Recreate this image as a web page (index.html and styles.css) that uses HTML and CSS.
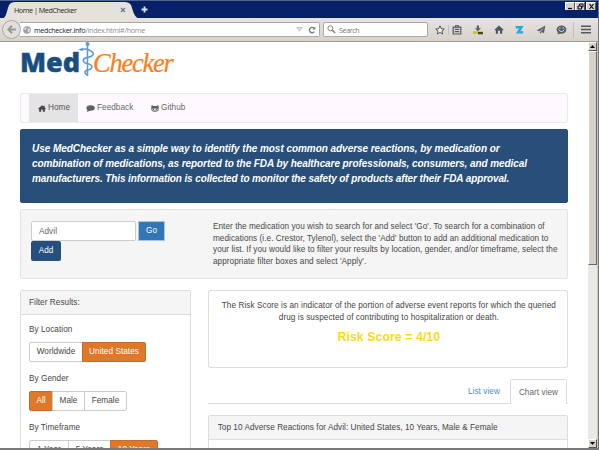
FILE: index.html
```html
<!DOCTYPE html>
<html lang="en">
<head>
<meta charset="utf-8">
<title>Home | MedChecker</title>
<link rel="stylesheet" href="styles.css">
</head>
<body>
<div class="window">
  <div class="titlebar">
    <svg class="tab-shape" width="145" height="18" viewBox="0 0 145 18"><path d="M0 18C6 18 6 13 8 7Q9 1 15 1H125Q131 1 132 7C134 13 135 18 142 18Z" fill="#e5e1db"/></svg>
    <span class="tab-title">Home | MedChecker</span>
    <svg class="tab-close" width="6" height="6" viewBox="0 0 6 6"><path d="M1 1L5 5M5 1L1 5" stroke="#6c7780" stroke-width="1.3"/></svg>
    <svg class="tab-new" width="7" height="7" viewBox="0 0 7 7"><path d="M3.5 .5V6.5M.5 3.5H6.5" stroke="#dce1ee" stroke-width="1.8"/></svg>
    <div class="controls">
      <span class="ctl"><svg width="9" height="7" viewBox="0 0 9 7"><path d="M2 5.5H6" stroke="#000" stroke-width="1.2"/></svg></span>
      <span class="ctl"><svg width="9" height="7" viewBox="0 0 9 7"><path d="M3.5 2.5V1H7V4H5.5M2 3H5.5V6H2Z" fill="none" stroke="#000"/></svg></span>
      <span class="ctl last"><svg width="9" height="7" viewBox="0 0 9 7"><path d="M2.5 1L6.5 6M6.5 1L2.5 6" stroke="#000" stroke-width="1.1"/></svg></span>
    </div>
  </div>
  <div class="toolbar">
    <span class="back"><svg width="10" height="9" viewBox="0 0 10 9"><path d="M5 .8L1.4 4.5L5 8.2M1.6 4.5H9" fill="none" stroke="#93999d" stroke-width="2"/></svg></span>
    <div class="url">
      <svg class="globe" width="8" height="8" viewBox="0 0 8 8"><circle cx="4" cy="4" r="3.8" fill="#9b9fa3"/><path d="M1.2 2L3.5 1.2L3 3.6L1.6 4M4.5 3L6.8 2.4L6.5 5.5L5 6.5Z" fill="#e3e5e6"/></svg>
      <span class="address"><b>medchecker.info</b>/index.html#/home</span>
      <svg class="drop" width="7" height="5" viewBox="0 0 7 5"><path d="M.7 .5H6.3L3.5 4.3Z" fill="#dde1ee" stroke="#b4bbce" stroke-width=".8"/></svg>
      <svg width="8" height="8" viewBox="0 0 8 8"><path d="M6.3 5.7A2.7 2.7 0 1 1 6 2.1" fill="none" stroke="#74818d" stroke-width="1.4"/><path d="M7.3 .4V3.6H4.2Z" fill="#74818d"/></svg>
    </div>
    <div class="search">
      <svg width="9" height="9" viewBox="0 0 9 9"><circle cx="3.4" cy="3.3" r="2.5" fill="none" stroke="#858585"/><path d="M5.2 5.1L8.2 8" stroke="#858585" stroke-width="1.5"/></svg>
      <span>Search</span>
    </div>
    <div class="tools">
      <svg width="10" height="10" viewBox="0 0 10 10"><path d="M5 .9L6.2 3.7L9.3 4L7 6L7.7 9L5 7.4L2.3 9L3 6L.7 4L3.8 3.7Z" fill="#eee" stroke="#4e5a64"/></svg>
      <i class="sep"></i>
      <svg class="clip" width="10" height="10" viewBox="0 0 10 10"><path d="M1.2 2.2H8.8V9H1.2Z" fill="none" stroke="#4e5a64" stroke-width="1.2"/><path d="M3.5 2V.8H6.5V2M2.8 4.4H7.2M2.8 6.6H7.2" fill="none" stroke="#4e5a64" stroke-width="1.1"/></svg>
      <svg class="dl" width="12" height="10" viewBox="0 0 12 10"><path d="M4.8 .5H7V3.3H9L5.9 6.3L2.8 3.3H4.8Z" fill="#52616b"/><path d="M1 6.2H11V9H1Z" fill="#bccb37"/><path d="M6 7H11V9.3H6Z" fill="#454914"/></svg>
      <svg class="hm" width="10" height="9" viewBox="0 0 10 9"><path d="M.4 4.8L5 .6L9.6 4.8L8.9 5.5L8.2 5V8.7H6V5.8H4V8.7H1.8V5L1 5.5Z" fill="#4e5a64"/></svg>
      <svg class="zz" width="9" height="9" viewBox="0 0 9 9"><path d="M.4 1H8.6L5.4 6.2L8 6V8.5H1L4 3.2L1 3.7Z" fill="#22a9e8"/></svg>
      <svg class="plane" width="10" height="10" viewBox="0 0 10 10"><path d="M9.3 .5L8 8.3L5.6 7L4.2 9.2L3.8 6.2L.6 5.6Z" fill="#52616b"/><path d="M3.8 6.2L8 2.3L4.8 6.7" fill="#d9dcdc"/></svg>
      <svg class="chat" width="11" height="10" viewBox="0 0 11 10"><ellipse cx="5.5" cy="4.6" rx="4.9" ry="4.1" fill="#52616b"/><path d="M2 6L1.5 9.6L5 8Z" fill="#52616b"/><path d="M2.5 4.5Q5.5 8.6 8.5 4.5M3 3H4.5M6.5 3H8" fill="none" stroke="#e3e3df" stroke-width=".9"/></svg>
      <i class="sep two"></i>
      <svg class="menu" width="10" height="9" viewBox="0 0 10 9"><path d="M0 1.3H10M0 4.5H10M0 7.7H10" stroke="#4e5a64" stroke-width="1.4"/></svg>
    </div>
  </div>
  <div class="viewport">
    <main class="page">
      <div class="logo">
        <span class="med">Med</span>
        <svg width="18" height="37" viewBox="0 0 18 37"><g fill="none" stroke="#5f98cf"><path d="M9.5 3V34" stroke-width="1.5"/><path d="M2 8Q7 6 12 8.5C18 11.500 15 14.500 9 15.500C4 16.500 4 20.500 9 21.500C16 23 15 27 9.500 28C6 29 6 32 10 33" stroke-width="1.5"/></g><circle cx="9.500" cy="2" r="2" fill="#5f98cf"/><path d="M0 7.500L5 6V9Z" fill="#5f98cf"/></svg>
        <span class="checker">Checker</span>
      </div>
      <nav class="nav">
        <a class="on"><svg width="8" height="7" viewBox="0 0 8 7"><path d="M0 3.7L4 .3L5.500 1.600V.8H6.700V2.600L8 3.700L7.500 4.200L6.900 3.700V6.700H4.800V4.500H3.200V6.700H1.100V3.700L.5 4.200Z" fill="#484848"/></svg><span>Home</span></a>
        <a class="fb"><svg width="9" height="7" viewBox="0 0 9 7"><ellipse cx="4.600" cy="3" rx="4.200" ry="2.800" fill="#606060"/><path d="M1.800 4L.8 6.900L4.500 5.500Z" fill="#606060"/></svg><span>Feedback</span></a>
        <a class="gh"><svg width="8" height="7" viewBox="0 0 8 7"><path d="M.5 0L2.500 1H5.500L7.500 0L7.700 3.500Q8 6.800 4 6.800Q0 6.800 .3 3.500Z" fill="#606060"/><path d="M1.500 3.600H6.500V5.500H1.500Z" fill="#f5f0f5"/><path d="M2.600 3.800V5.200M5.400 3.800V5.200" stroke="#606060"/></svg><span>Github</span></a>
      </nav>
      <section class="hero">
        <p class="h1">Use MedChecker as a simple way to identify the most common adverse reactions, by medication or</p>
        <p class="h2">combination of medications, as reported to the FDA by healthcare professionals, consumers, and medical</p>
        <p class="h3">manufacturers. This information is collected to monitor the safety of products after their FDA approval.</p>
      </section>
      <section class="query">
        <div class="form"><span class="input">Advil</span><span class="btn go">Go</span><span class="btn add">Add</span></div>
        <div class="help">
          <p>Enter the medication you wish to search for and select 'Go'. To search for a combination of</p>
          <p>medications (i.e. Crestor, Tylenol), select the 'Add' button to add an additional medication to</p>
          <p>your list. If you would like to filter your results by location, gender, and/or timeframe, select the</p>
          <p>appropriate filter boxes and select 'Apply'.</p>
        </div>
      </section>
      <div class="columns">
        <aside class="panel filter">
          <div class="head">Filter Results:</div>
          <div class="body">
            <div class="label">By Location</div>
            <div class="group"><span style="width:54px">Worldwide</span><span class="sel" style="width:64px">United States</span></div>
            <div class="label">By Gender</div>
            <div class="group"><span class="sel" style="width:24px">All</span><span style="width:33px">Male</span><span style="width:43px">Female</span></div>
            <div class="label">By Timeframe</div>
            <div class="group"><span style="width:40px">1 Year</span><span style="width:43px">5 Years</span><span class="sel" style="width:48px">10 Years</span></div>
          </div>
        </aside>
        <div class="results">
          <div class="panel risk">
            <p>The Risk Score is an indicator of the portion of adverse event reports for which the queried</p>
            <p>drug is suspected of contributing to hospitalization or death.</p>
            <strong>Risk Score = 4/10</strong>
          </div>
          <div class="tabs"><a>List view</a><a class="active">Chart view</a></div>
          <div class="panel chart"><div class="head">Top 10 Adverse Reactions for Advil: United States, 10 Years, Male &amp; Female</div></div>
        </div>
      </div>
    </main>
    <div class="scroll">
      <span class="arrow"><svg width="5" height="3" viewBox="0 0 5 3"><path d="M0 3L2.500 0L5 3Z"/></svg></span>
      <span class="thumb"></span>
      <span class="arrow down"><svg width="5" height="3" viewBox="0 0 5 3"><path d="M0 0L2.500 3L5 0Z"/></svg></span>
    </div>
  </div>
</div>
</body>
</html>
```
FILE: styles.css
```css
* { box-sizing: border-box; }
body { margin: 0; overflow: hidden; font: 8.2px/11.7px "Liberation Sans", Arial, sans-serif; letter-spacing: .05px; color: #454545; background: #fff; }
p { margin: 0; white-space: nowrap; }
svg { display: block; flex: none; }
.window { width: 599px; height: 450px; display: flex; flex-direction: column; border-top: 1px solid #52628b; border-right: 1px solid #777; border-bottom: 2px solid #7b7879; overflow: hidden; }
.titlebar { position: relative; height: 17px; flex: none; display: flex; align-items: center; background: #06216a; font: 7.2px "Open Sans", sans-serif; letter-spacing: -.4px; color: #282828; }
.tab-shape { position: absolute; left: 0; top: 0; }
.tab-title { position: relative; margin-left: 14px; width: 106px; letter-spacing: -.45px; }
.tab-close { position: relative; margin-right: 15px; }
.controls { display: flex; margin-left: auto; margin-right: 2px; margin-top: -7px; }
.ctl { width: 10px; height: 8px; background: #d6d2ca; border: solid #fff; border-width: 1px 0 0 1px; border-right: 1px solid #555; }
.ctl.last { margin-left: 1px; }
.toolbar { height: 24px; flex: none; display: flex; align-items: center; background: linear-gradient(#e7e2dd, #d7d2cb); border-bottom: 1px solid #9f9d9a; font: 7.2px "Open Sans", sans-serif; color: #777; letter-spacing: -.32px; }
.back { position: relative; width: 19px; height: 19px; margin-left: 2px; border: 1px solid #aaa7a3; border-radius: 50%; background: #e3dfda; display: flex; align-items: center; justify-content: center; flex: none; }
.url, .search { height: 15px; display: flex; align-items: center; background: #fff; border: 1px solid #adaaa6; }
.url { width: 300px; margin-left: -1px; border-left: 0; padding: 0 3px; flex: none; border-radius: 0 2px 2px 0; }
.address { margin-left: 3px; flex: 1; color: #909090; }
.address b { font-weight: 400; color: #222; }
.drop { margin-right: 5px; }
.search { width: 105px; margin-left: 3px; padding-left: 3px; gap: 3px; border-radius: 2px; flex: none; letter-spacing: -.4px; }
.tools { display: flex; align-items: center; margin-left: 7px; }
.sep { width: 1px; height: 10px; background: #bfc0bf; margin-left: 3px; }
.clip { margin-left: 3px; } .dl { margin-left: 10px; } .hm { margin-left: 10px; } .zz { margin-left: 11px; }
.plane { margin-left: 12px; } .chat { margin-left: 10px; }
.sep.two { height: 16px; margin-left: 6px; } .menu { margin-left: 7px; }
.viewport { flex: 1; min-height: 0; display: flex; }
.page { width: 588px; padding: 0 20px; overflow: hidden; flex: none; }
.logo { height: 51px; display: flex; align-items: flex-start; }
.med { width: 58px; font: 800 27px/37px "Open Sans", sans-serif; letter-spacing: 0; color: #194f80; -webkit-text-stroke: .4px #194f80; padding-top: 1px; white-space: nowrap; }
.checker { margin-left: -3px; font: italic 26.500px/37px "Liberation Serif", serif; letter-spacing: -1.25px; color: #fb7d22; -webkit-text-stroke: .2px #fb7d22; padding-top: 3px; }
.nav { height: 30px; display: flex; padding-left: 8px; border: 1px solid #eee9ef; border-radius: 2px; background: #fdf9ff; color: #686868; }
.nav a { display: flex; align-items: center; gap: 2px; }
.nav .on { width: 49px; padding-left: 9px; background: #e5e3e6; color: #555; }
.nav .fb { margin-left: 8px; width: 65px; }
.hero { height: 74px; margin-top: 6px; padding: 11px; border: 1px solid #284b79; border-radius: 2px; background: #284f79; color: #fff; font: italic bold 10px/15px "Liberation Sans", sans-serif; }
.h1 { letter-spacing: -.045px; }
.h2 { letter-spacing: -.08px; }
.h3 { letter-spacing: -.115px; }
.query { height: 70px; margin-top: 6px; display: flex; border: 1px solid #e6e2e4; border-radius: 2px; background: #f5f5f5; padding: 11px 11px 0 10px; }
.form { width: 182px; flex: none; display: flex; flex-wrap: wrap; align-content: flex-start; gap: 0 2px; }
.input { width: 105px; height: 20px; border: 1px solid #ccc; border-radius: 2px; background: #fff; padding: 4px 7px; color: #666; }
.btn { height: 20px; line-height: 20px; text-align: center; color: #fff; border-radius: 2px; background: #264f7d; }
.go { width: 27px; background: #3276b5; outline: 1px solid #a8c5df; outline-offset: -1px; }
.add { width: 30px; margin-right: 60px; }
.help { color: #484848; }
.columns { display: flex; gap: 17px; margin-top: 11px; }
.panel { border: 1px solid #ddd; border-radius: 2px; background: #fff; }
.head { height: 24px; line-height: 23px; padding-left: 8px; background: #f5f5f5; border-bottom: 1px solid #ddd; white-space: nowrap; }
.chart .head { padding-left: 9px; }
.filter { width: 171px; height: 220px; }
.body { padding: 9px 8px; }
.label { height: 18px; }
.group { height: 20px; margin-bottom: 11px; display: flex; }
.group span { border: 1px solid #ccc; margin-right: -1px; text-align: center; line-height: 18px; white-space: nowrap; }
.group span:first-child { border-radius: 2px 0 0 2px; }
.group span:last-child { border-radius: 0 2px 2px 0; margin-right: 0; }
.group .sel { background: #df7829; border-color: #c26b2a; color: #fff; }
.results { width: 361px; }
.risk { height: 78px; padding: 9px 0 0 2px; text-align: center; letter-spacing: .07px; }
.risk p { display: flex; justify-content: center; }
.risk strong { display: block; margin-top: 6px; font-size: 12.300px; line-height: 17px; color: #ffd815; }
.tabs { height: 25px; margin-top: 11px; display: flex; justify-content: flex-end; border-bottom: 1px solid #ddd; }
.tabs a { width: 42px; line-height: 25px; color: #4a90d0; white-space: nowrap; }
.tabs .active { width: 57px; height: 25px; margin-right: 1px; text-align: center; color: #666; background: #fff; border: 1px solid #ddd; border-bottom: 0; border-radius: 2px 2px 0 0; }
.chart { height: 80px; margin-top: 11px; }
.scroll { width: 10px; display: flex; flex-direction: column; background: #ebe9e5; border-right: 1px solid #cac7c0; }
.arrow { height: 9px; display: flex; align-items: center; justify-content: center; background: #d6d2ca; border: 1px solid; border-color: #fff #555 #555 #fff; flex: none; }
.thumb { height: 214px; background: #d6d2ca; border: 1px solid; border-color: #fff #666 #666 #fff; }
.down { margin-top: auto; }
```
